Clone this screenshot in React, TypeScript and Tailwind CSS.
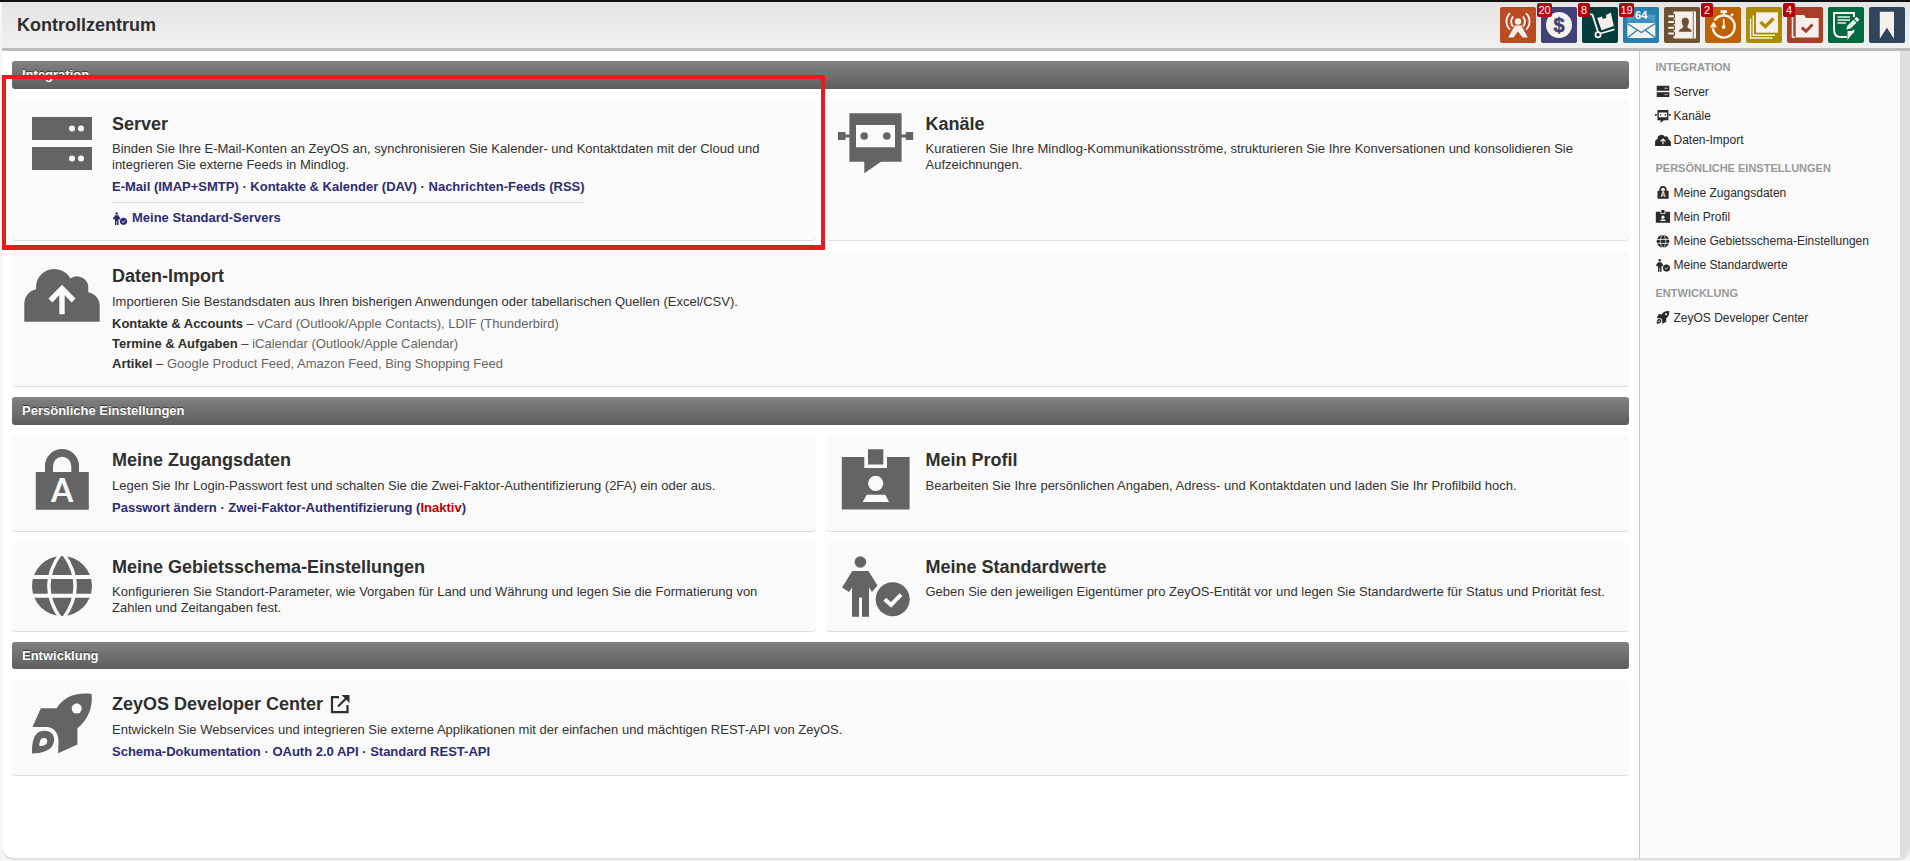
import React from 'react';
import clsx from 'clsx';

type IconName =
  | 'server'
  | 'channels'
  | 'cloud'
  | 'lock'
  | 'badge'
  | 'globe'
  | 'defaults'
  | 'rocket';

interface IconProps {
  name: IconName;
  className?: string;
  hole?: string;
}

// all the icons share one 76x60 box, "hole" is the background colour
function Icon({ name, className, hole = '#fafafa' }: IconProps) {
  return (
    <svg
      viewBox="0 0 76 60"
      className={clsx('shrink-0 overflow-visible', className)}
      fill="currentColor"
    >
      {name === 'server' && (
        <>
          <path d="M8 4h60v23H8zM8 34h60v23H8z" />
          <g fill={hole}>
            <circle cx="48" cy="15.5" r="3" />
            <circle cx="57" cy="15.5" r="3" />
            <circle cx="48" cy="45.5" r="3" />
            <circle cx="57" cy="45.5" r="3" />
          </g>
        </>
      )}
      {name === 'channels' && (
        <>
          <path
            fillRule="evenodd"
            d="M11.4 .3H63.6V48.7H43L26.3 60.3V48.7H11.4zM18 12V34.3H57V12z"
          />
          <path d="M0 19h7.5v8H0zM67.7 19h7.5v8h-7.5zM7 21.6h5v3H7zM63 21.6h5v3h-5z" />
          <circle cx="26.2" cy="23" r="3.8" />
          <circle cx="48.8" cy="23" r="3.8" />
        </>
      )}
      {name === 'cloud' && (
        <>
          <path d="M.3 56.7V38.8C.3 31.5 5.5 25.7 12 24.3V22.3A18.3 18.3 0 0 1 46.4 13.6A11.3 11.3 0 0 1 64.3 23.5V27.3C71 28.7 75.7 34 75.7 40.5V56.7z" />
          <path
            d="M26.4 35.5L38 23.7L49.6 35.5M38 24V49.3"
            fill="none"
            stroke={hole}
            strokeWidth="5.4"
          />
        </>
      )}
      {name === 'lock' && (
        <>
          <path d="M11.8 23H21V17A17 17 0 0 1 55 17V23H64.8V60.7H11.8zM29 23H47.3V17A9.1 9.1 0 0 0 29 17z" />
          <text
            x="38"
            y="53.3"
            textAnchor="middle"
            fill={hole}
            className="font-['Lato'] text-[32px] font-bold"
          >
            A
          </text>
        </>
      )}
      {name === 'badge' && (
        <>
          <path d="M3.8 8H26.3V19H49V8H71.6V60.6H3.8zM30 .2H45.3V15.6H30z" />
          <g fill={hole}>
            <circle cx="37.7" cy="34.3" r="7.6" />
            <path d="M28.7 45.7H47.3L51 53H24.6z" />
          </g>
        </>
      )}
      {name === 'globe' && (
        <>
          <circle cx="38" cy="30" r="30" />
          <g fill="none" stroke={hole} strokeWidth="4">
            <path d="M7 21H69M7 39.8H69" />
            <path
              d="M37 -3C20.8 19 20.8 41 37 63M39 -3C55.2 19 55.2 41 39 63"
              strokeWidth="3.4"
            />
          </g>
        </>
      )}
      {name === 'defaults' && (
        <>
          <circle cx="22.4" cy="6" r="5.8" />
          <path d="M14.3 15H30.4L39.5 29.6L34 36L31 31.5V60.7H24V41.5H21V60.7H14V31.5L11 36L4 31.5z" />
          <circle cx="54.7" cy="43.3" r="17" />
          <path
            d="M46.8 43.2L53 49L63 38.6"
            fill="none"
            stroke={hole}
            strokeWidth="4"
          />
        </>
      )}
      {name === 'rocket' && (
        <>
          <path d="M67.6 .9C69 14 64 27 53.4 35.2V51.5L34.2 60.2C34 55 35.4 48 33.5 42C31 35.5 26 34 21 34H8.5L16.8 15.2H32.6C40 3.5 52 -1 67.6 .9z" />
          <path d="M8 60.5C8 49 9.5 37.8 20.5 37.8C27 37.8 31.2 42.5 30 48.5C28.3 57 20 60.3 8 60.5z" />
          <g fill={hole}>
            <circle cx="52.7" cy="15.6" r="5" />
            <path d="M15.3 53C15.3 48.5 16.5 45 20 45C22.5 45 23.7 47 23.2 49C22.3 52 19.5 53 15.3 53z" />
          </g>
        </>
      )}
    </svg>
  );
}

interface AppButton {
  bg: string;
  badge?: number;
  icon: React.ReactNode;
}

const appButtons: AppButton[] = [
  {
    bg: 'bg-[#bb4b20]',
    icon: (
      <>
        <circle cx="18" cy="14.5" r="3.2" />
        <path d="M14.8 18.5h6.4L27.8 30.5h-5.2L18 24.5L13.4 30.5H8.2z" />
        <g fill="none" stroke="currentColor" strokeWidth="1.9">
          <path d="M13.2 9.5A7 7 0 0 0 13.2 19.5M22.8 9.5A7 7 0 0 1 22.8 19.5" />
          <path d="M10 6.2A11.3 11.3 0 0 0 10 22.6M26 6.2A11.3 11.3 0 0 1 26 22.6" />
        </g>
      </>
    ),
  },
  {
    bg: 'bg-[#414077]',
    badge: 20,
    icon: (
      <>
        <circle cx="18" cy="18" r="13" />
        <text
          x="18"
          y="25"
          textAnchor="middle"
          fill="#414077"
          stroke="#414077"
          strokeWidth="0.5"
          className="text-[20px] font-bold"
        >
          $
        </text>
      </>
    ),
  },
  {
    bg: 'bg-[#043c39]',
    badge: 8,
    icon: (
      <>
        <path d="M15.2 11L20 9.5L20.8 12L24.5 10.8L23.8 8.2L28.8 5.5L31.8 19L19.5 23.2z" />
        <g fill="none" stroke="currentColor" strokeWidth="1.8">
          <path d="M8 7L10.5 7.8L16 25M18.5 26.5L32.5 22.3" />
          <circle cx="16" cy="27.7" r="2.6" />
        </g>
      </>
    ),
  },
  {
    bg: 'bg-[#267fac]',
    badge: 19,
    icon: (
      <>
        <path d="M4.3 7.5H32.3V16H4.3z" fill="#4b9dc2" />
        <path d="M4.3 16L18 6L32.3 16V31H4.3z" fill="#3b90b8" />
        <path d="M4.3 16H32.3V31H4.3z" />
        <path
          d="M4.3 16.5L18.3 25.5L32.3 16.5M4.3 30.7L14.5 23M32.3 30.7L22 23"
          fill="none"
          stroke="#267fac"
          strokeWidth="1.3"
        />
        <text
          x="18.2"
          y="12"
          textAnchor="middle"
          fill="#fff"
          className="text-[11px] font-bold"
        >
          64
        </text>
      </>
    ),
  },
  {
    bg: 'bg-[#6e5032]',
    icon: (
      <>
        <path d="M9.5 4.5H32V31.5H9.5z" />
        <path
          d="M29.3 5V31"
          stroke="#6e5032"
          strokeWidth="0.8"
        />
        <path
          d="M4 9.2H11M4 15H11M4 20.8H11M4 26.6H11"
          stroke="#6e5032"
          strokeWidth="4.4"
        />
        <path
          d="M4.3 9.2H10M4.3 15H10M4.3 20.8H10M4.3 26.6H10"
          stroke="currentColor"
          strokeWidth="2"
        />
        <path
          d="M21.3 10.8C24.3 10.8 25.3 13 24.8 15.8C24.5 17.5 23.4 18.4 23.4 20C23.8 21.8 27.6 21.5 27.8 24.8H14.8C15 21.5 18.8 21.8 19.2 20C19.2 18.4 18.1 17.5 17.8 15.8C17.3 13 18.3 10.8 21.3 10.8z"
          fill="#6e5032"
        />
      </>
    ),
  },
  {
    bg: 'bg-[#bd6200]',
    badge: 2,
    icon: (
      <>
        <path d="M15.5 3.3H22V6H15.5zM17.8 5H20V9H17.8zM17.9 12H19.5V19H17.9z" />
        <circle cx="18.7" cy="20" r="1.9" />
        <path
          d="M7.8 21A11 11 0 1 0 9.5 13.5M26 8.8L28 6.8"
          fill="none"
          stroke="currentColor"
          strokeWidth="2.4"
        />
        <path d="M4.7 20.5L8.7 14.5L12 20.5z" />
      </>
    ),
  },
  {
    bg: 'bg-[#a98c00]',
    icon: (
      <>
        <path d="M10 5.3H32V25.7H10z" />
        <path
          d="M7.3 8.5V28.3H29M4.6 11.5V31H26.5"
          fill="none"
          stroke="currentColor"
          strokeWidth="1.4"
        />
        <path
          d="M14.5 15L19.3 19.5L27.5 11.5"
          fill="none"
          stroke="#a98c00"
          strokeWidth="3.3"
        />
      </>
    ),
  },
  {
    bg: 'bg-[#a83f26]',
    badge: 4,
    icon: (
      <>
        <path d="M8.7 8H17L19 11H31.7V30.5H8.7z" />
        <path
          d="M5.5 10V30.3H8"
          fill="none"
          stroke="currentColor"
          strokeWidth="1.6"
        />
        <path
          d="M14.8 20.5L19 24.2L25.5 17.5"
          fill="none"
          stroke="#a83f26"
          strokeWidth="3"
        />
      </>
    ),
  },
  {
    bg: 'bg-[#00693f]',
    icon: (
      <>
        <path
          d="M26 10V6H6V22Q6 30 12 30H19M26 23L20.5 30V25H26"
          fill="none"
          stroke="currentColor"
          strokeWidth="2"
        />
        <path
          d="M9.5 10H22M9.5 13H22M9.5 16H18"
          stroke="currentColor"
          strokeWidth="1.3"
        />
        <path d="M18.3 22.5L19.5 18.5L25.5 12.8L28.5 15.8L22.5 21.5zM26.3 12L28.5 9.8L31.5 12.8L29.3 15z" />
        <path d="M20 24.5H26.5L20 31z" />
      </>
    ),
  },
  {
    bg: 'bg-[#30455b]',
    icon: <path d="M10.8 4.8H25V31.7L17.9 20.7L10.8 31.7z" />,
  },
];

function SectionBar({ title, className }: { title: string; className?: string }) {
  return (
    <div
      className={clsx(
        'flex shrink-0 items-center rounded-[3px] bg-linear-to-b from-[#828282] to-[#5e5e5e] px-2.5 text-[13px] leading-4 font-bold text-white [text-shadow:0_-1px_1px_#333]',
        className,
      )}
    >
      {title}
    </div>
  );
}

interface CardProps {
  icon: IconName;
  title: React.ReactNode;
  text: string;
  tight?: boolean;
  className?: string;
  children?: React.ReactNode;
}

function Card({ icon, title, text, tight, className, children }: CardProps) {
  return (
    <div
      className={clsx(
        'flex rounded-[4px] border-b border-[#dedede] bg-[#fafafa] pt-3.5',
        className,
      )}
    >
      <div className="flex w-[100px] shrink-0 justify-center">
        <Icon name={icon} className="h-[60px] w-[76px] text-[#646464]" />
      </div>
      <div className="min-w-0 flex-1 pr-5">
        <h2 className="flex h-[22px] items-center text-[18px] leading-[22px] font-bold text-[#2f2f2f]">
          {title}
        </h2>
        <p
          className={clsx(
            'text-[13px] leading-4 text-[#333]',
            tight ? 'mt-1.5' : 'mt-[7px]',
          )}
        >
          {text}
        </p>
        {children}
      </div>
    </div>
  );
}

function Links({ items }: { items: React.ReactNode[] }) {
  return (
    <div className="mt-1.5 text-[13px] leading-4 font-bold whitespace-nowrap text-[#2c2c73]">
      {items.map((item, index) => (
        <React.Fragment key={index}>
          {index > 0 && <span className="text-[#333]"> · </span>}
          <a>{item}</a>
        </React.Fragment>
      ))}
    </div>
  );
}

const importRows = [
  ['Kontakte & Accounts', 'vCard (Outlook/Apple Contacts), LDIF (Thunderbird)'],
  ['Termine & Aufgaben', 'iCalendar (Outlook/Apple Calendar)'],
  ['Artikel', 'Google Product Feed, Amazon Feed, Bing Shopping Feed'],
];

const navGroups: { title: string; items: [IconName, string][] }[] = [
  {
    title: 'INTEGRATION',
    items: [
      ['server', 'Server'],
      ['channels', 'Kanäle'],
      ['cloud', 'Daten-Import'],
    ],
  },
  {
    title: 'PERSÖNLICHE EINSTELLUNGEN',
    items: [
      ['lock', 'Meine Zugangsdaten'],
      ['badge', 'Mein Profil'],
      ['globe', 'Meine Gebietsschema-Einstellungen'],
      ['defaults', 'Meine Standardwerte'],
    ],
  },
  {
    title: 'ENTWICKLUNG',
    items: [['rocket', 'ZeyOS Developer Center']],
  },
];

export default function App() {
  return (
    <div className="relative flex h-[861px] w-[1910px] flex-col overflow-hidden bg-[#f5f5f5] font-['Liberation_Sans',Arial,sans-serif]">
      <div className="h-0.5 shrink-0 bg-[#111]" />
      <header className="ml-0.5 flex h-[49px] shrink-0 items-start justify-between border-b-3 border-[#bdbdbd] bg-linear-to-b from-[#e4e4e4] to-[#f1f1f1] pt-[5px] pr-[5px] pl-[15px]">
        <h1 className="mt-[7px] text-[18px] leading-[22px] font-bold text-[#2f2f2f]">
          Kontrollzentrum
        </h1>
        <div className="flex gap-[5px]">
          {appButtons.map((button, index) => (
            <div
              key={index}
              className={clsx('relative size-9 rounded-[2px]', button.bg)}
            >
              <svg
                viewBox="0 0 36 36"
                className="size-9 text-[#f6f0ec]"
                fill="currentColor"
              >
                {button.icon}
              </svg>
              {button.badge && (
                <span
                  className={clsx(
                    'absolute -top-1 -left-1 h-3.5 rounded-[2px] bg-[#b8000c] text-center text-[11px] leading-3.5 text-white',
                    button.badge > 9 ? 'w-[15px]' : 'w-3',
                  )}
                >
                  {button.badge}
                </span>
              )}
            </div>
          ))}
        </div>
      </header>

      <div className="ml-0.5 flex h-[808px] shrink-0 overflow-hidden rounded-b-[12px] border-b border-[#dcdcdc] bg-white shadow-[0_1px_1px_#e0e0e0]">
        <main className="flex flex-1 flex-col gap-2.5 px-2.5 pt-2.5">
          <SectionBar title="Integration" className="h-7" />
          <div className="grid grid-cols-2 gap-2.5">
            <Card
              icon="server"
              title="Server"
              text="Binden Sie Ihre E-Mail-Konten an ZeyOS an, synchronisieren Sie Kalender- und Kontaktdaten mit der Cloud und integrieren Sie externe Feeds in Mindlog."
              tight
              className="h-[142px]"
            >
              <div className="inline-block">
                <Links
                  items={[
                    'E-Mail (IMAP+SMTP)',
                    'Kontakte & Kalender (DAV)',
                    'Nachrichten-Feeds (RSS)',
                  ]}
                />
                <div className="mt-[7px] flex items-center gap-1 border-t border-[#dedede] pt-[7px] text-[13px] leading-4 font-bold text-[#2c2c73]">
                  <Icon name="defaults" className="h-[13px] w-4" />
                  Meine Standard-Servers
                </div>
              </div>
            </Card>
            <Card
              icon="channels"
              title="Kanäle"
              text="Kuratieren Sie Ihre Mindlog-Kommunikationsströme, strukturieren Sie Ihre Konversationen und konsolidieren Sie Aufzeichnungen."
              tight
            />
          </div>
          <Card
            icon="cloud"
            title="Daten-Import"
            text="Importieren Sie Bestandsdaten aus Ihren bisherigen Anwendungen oder tabellarischen Quellen (Excel/CSV)."
            className="h-[136px] shrink-0"
          >
            <div className="mt-1 text-[13px] leading-5 text-[#666]">
              {importRows.map(([name, formats]) => (
                <div key={name}>
                  <b className="text-[#2f2f2f]">{name}</b>
                  <span className="text-[#333]"> – </span>
                  {formats}
                </div>
              ))}
            </div>
          </Card>

          <SectionBar title="Persönliche Einstellungen" className="h-7" />
          <div className="grid grid-cols-2 gap-2.5">
            <Card
              icon="lock"
              title="Meine Zugangsdaten"
              text="Legen Sie Ihr Login-Passwort fest und schalten Sie die Zwei-Faktor-Authentifizierung (2FA) ein oder aus."
              className="h-[97px]"
            >
              <Links
                items={[
                  'Passwort ändern',
                  <>
                    Zwei-Faktor-Authentifizierung (
                    <span className="text-[#c00000]">Inaktiv</span>)
                  </>,
                ]}
              />
            </Card>
            <Card
              icon="badge"
              title="Mein Profil"
              text="Bearbeiten Sie Ihre persönlichen Angaben, Adress- und Kontaktdaten und laden Sie Ihr Profilbild hoch."
            />
            <Card
              icon="globe"
              title="Meine Gebietsschema-Einstellungen"
              text="Konfigurieren Sie Standort-Parameter, wie Vorgaben für Land und Währung und legen Sie die Formatierung von Zahlen und Zeitangaben fest."
              tight
              className="h-[90px]"
            />
            <Card
              icon="defaults"
              title="Meine Standardwerte"
              text="Geben Sie den jeweiligen Eigentümer pro ZeyOS-Entität vor und legen Sie Standardwerte für Status und Priorität fest."
              tight
            />
          </div>

          <SectionBar title="Entwicklung" className="h-[27px]" />
          <Card
            icon="rocket"
            title={
              <>
                ZeyOS Developer Center
                <svg
                  viewBox="0 0 20 20"
                  className="mb-px ml-[7px] size-5"
                  fill="none"
                  stroke="currentColor"
                  strokeWidth="2.2"
                >
                  <path d="M9 3.2H2V18.2H17.5V11M8 12.5L16 4.5" />
                  <path
                    d="M11.5 1H19.5V9z"
                    fill="currentColor"
                    stroke="none"
                  />
                </svg>
              </>
            }
            text="Entwickeln Sie Webservices und integrieren Sie externe Applikationen mit der einfachen und mächtigen REST-API von ZeyOS."
            className="h-[97px] shrink-0"
          >
            <Links
              items={[
                'Schema-Dokumentation',
                'OAuth 2.0 API',
                'Standard REST-API',
              ]}
            />
          </Card>
        </main>

        <aside className="w-[271px] shrink-0 border-r-10 border-l border-r-[#e0e0e0] border-l-[#c8c8c8] bg-[#fafafa] pt-[5px] pl-[15px]">
          {navGroups.map((group) => (
            <section key={group.title} className="pb-[4.7px]">
              <h3 className="pl-[0.5px] text-[11px] leading-[23.6px] font-bold text-[#999]">
                {group.title}
              </h3>
              {group.items.map(([icon, label]) => (
                <a
                  key={label}
                  className="flex h-[24.2px] items-center gap-[2.5px] text-[12px] text-[#2b2b2b]"
                >
                  <Icon name={icon} className="h-[12.6px] w-4" />
                  {label}
                </a>
              ))}
            </section>
          ))}
        </aside>
      </div>

      {/* highlight frame round the server card */}
      <div className="absolute top-[75px] left-0.5 h-[175px] w-[823px] border-4 border-b-5 border-[#e81c1c]" />
    </div>
  );
}
